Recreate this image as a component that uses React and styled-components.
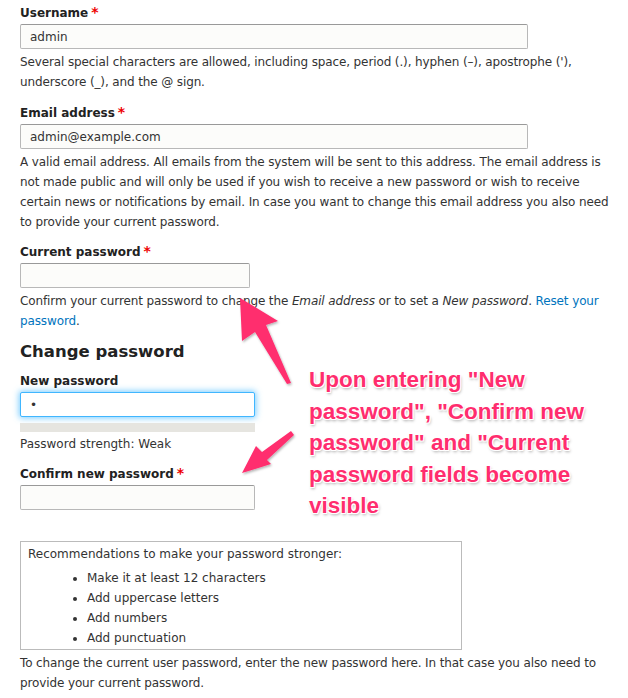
import React from "react";
import styled, { createGlobalStyle } from "styled-components";

const GlobalStyle = createGlobalStyle`
  html, body {
    margin: 0;
    padding: 0;
    background: #fff;
  }
  body {
    font-family: "DejaVu Sans", "Liberation Sans", sans-serif;
    font-size: 12px;
    color: #333;
  }
`;

const Page = styled.div`
  position: relative;
  width: 628px;
  height: 698px;
  overflow: hidden;
  box-sizing: border-box;
  padding: 2px 20px 0 20px;
`;

const Field = styled.div`
  margin-bottom: ${(p) => p.$gap || 10}px;
`;

const Label = styled.label`
  display: block;
  font-weight: bold;
  line-height: 20px;
  margin-bottom: 1px;
  color: #222;
`;

const Required = styled.span`
  color: #e00;
  font-size: 14px;
  margin-left: 3px;
`;

const Input = styled.input`
  display: block;
  box-sizing: border-box;
  width: ${(p) => p.$width}px;
  height: 25px;
  margin: 0;
  padding: 0 9px;
  font-family: "DejaVu Sans", sans-serif;
  font-size: 12px;
  color: #333;
  background: ${(p) => (p.$focused ? "#fff" : "#fcfcfa")};
  border: 1px solid ${(p) => (p.$focused ? "#40b6ff" : "#b8b8b8")};
  border-top-color: ${(p) => (p.$focused ? "#40b6ff" : "#999")};
  border-radius: 2px;
  box-shadow: ${(p) =>
    p.$focused ? "0 0 6px 1px rgba(64,182,255,0.7)" : "none"};
  outline: none;
`;

const Description = styled.div`
  margin-top: 3px;
  line-height: 20px;
  width: 595px;
  letter-spacing: -0.12px;
  em {
    font-style: italic;
  }
  a {
    color: #0074bd;
    text-decoration: none;
  }
`;

const Heading = styled.h2`
  margin: 0 0 9px 0;
  font-size: 16.5px;
  line-height: 20px;
  font-weight: bold;
  color: #222;
`;

const StrengthBar = styled.div`
  width: 235px;
  height: 9px;
  margin: 6px 0 2px 0;
  background: #e6e5e0;
`;

const StrengthText = styled.div`
  line-height: 20px;
`;

const Recommendations = styled.div`
  box-sizing: border-box;
  width: 442px;
  margin-top: 31px;
  padding: 2px 7px 1px 7px;
  border: 1px solid #bbb;
  line-height: 20px;
`;

const Tips = styled.ul`
  margin: 4px 0 0 0;
  padding-left: 59px;
  list-style: disc;
  li {
    line-height: 20px;
  }
`;

const Footer = styled.div`
  margin-top: 3px;
  line-height: 20px;
  width: 595px;
  letter-spacing: -0.12px;
`;

const Note = styled.div`
  position: absolute;
  left: 309px;
  top: 364px;
  width: 310px;
  font-family: "Liberation Sans", Arial, sans-serif;
  font-weight: bold;
  font-size: 22.5px;
  line-height: 31.5px;
  color: #ff2d6e;
  text-shadow: 0 0 1px #fff, 0 0 2px #fff, 1px 1px 0 #fff, -1px -1px 0 #fff,
    1px -1px 0 #fff, -1px 1px 0 #fff, 1px 2px 3px rgba(0, 0, 0, 0.35);
`;

const Arrows = styled.svg`
  position: absolute;
  left: 0;
  top: 0;
  width: 628px;
  height: 698px;
  pointer-events: none;
`;

function Annotation() {
  return (
    <>
      <Arrows viewBox="0 0 628 698">
        <defs>
          <filter id="sh" x="-20%" y="-20%" width="140%" height="140%">
            <feDropShadow dx="1" dy="1.5" stdDeviation="1.2" floodColor="#000" floodOpacity="0.3" />
          </filter>
        </defs>
        <g fill="#ff2d6e" filter="url(#sh)">
          <polygon points="240,298 278,321 266,325 291,383 287,384 255,332 242,341" />
          <polygon points="242,473 256,446 262,452 291,431 294,435 267,460 271,464" />
        </g>
      </Arrows>
      <Note>
        Upon entering "New password", "Confirm new password" and "Current
        password fields become visible
      </Note>
    </>
  );
}

export default function App() {
  return (
    <>
      <GlobalStyle />
      <Page>
        <Field>
          <Label>
            Username<Required>*</Required>
          </Label>
          <Input $width={508} defaultValue="admin" readOnly />
          <Description>
            Several special characters are allowed, including space, period
            (.), hyphen (–), apostrophe ('), underscore (_), and the @ sign.
          </Description>
        </Field>
        <Field $gap={9}>
          <Label>
            Email address<Required>*</Required>
          </Label>
          <Input $width={508} defaultValue="admin@example.com" readOnly />
          <Description>
            A valid email address. All emails from the system will be sent to
            this address. The email address is not made public and will only be
            used if you wish to receive a new password or wish to receive
            certain news or notifications by email. In case you want to change
            this email address you also need to provide your current password.
          </Description>
        </Field>
        <Field $gap={11}>
          <Label>
            Current password<Required>*</Required>
          </Label>
          <Input $width={230} type="password" readOnly />
          <Description>
            Confirm your current password to change the <em>Email address</em>{" "}
            or to set a <em>New password</em>.{" "}
            <a href="#reset">Reset your password</a>.
          </Description>
        </Field>
        <Heading>Change password</Heading>
        <Field $gap={9}>
          <Label>New password</Label>
          <Input $width={235} $focused type="password" defaultValue="a" readOnly />
          <StrengthBar />
          <StrengthText>Password strength: Weak</StrengthText>
        </Field>
        <Field $gap={0}>
          <Label>
            Confirm new password<Required>*</Required>
          </Label>
          <Input $width={235} type="password" readOnly />
        </Field>
        <Recommendations>
          Recommendations to make your password stronger:
          <Tips>
            <li>Make it at least 12 characters</li>
            <li>Add uppercase letters</li>
            <li>Add numbers</li>
            <li>Add punctuation</li>
          </Tips>
        </Recommendations>
        <Footer>
          To change the current user password, enter the new password here. In
          that case you also need to provide your current password.
        </Footer>
        <Annotation />
      </Page>
    </>
  );
}
